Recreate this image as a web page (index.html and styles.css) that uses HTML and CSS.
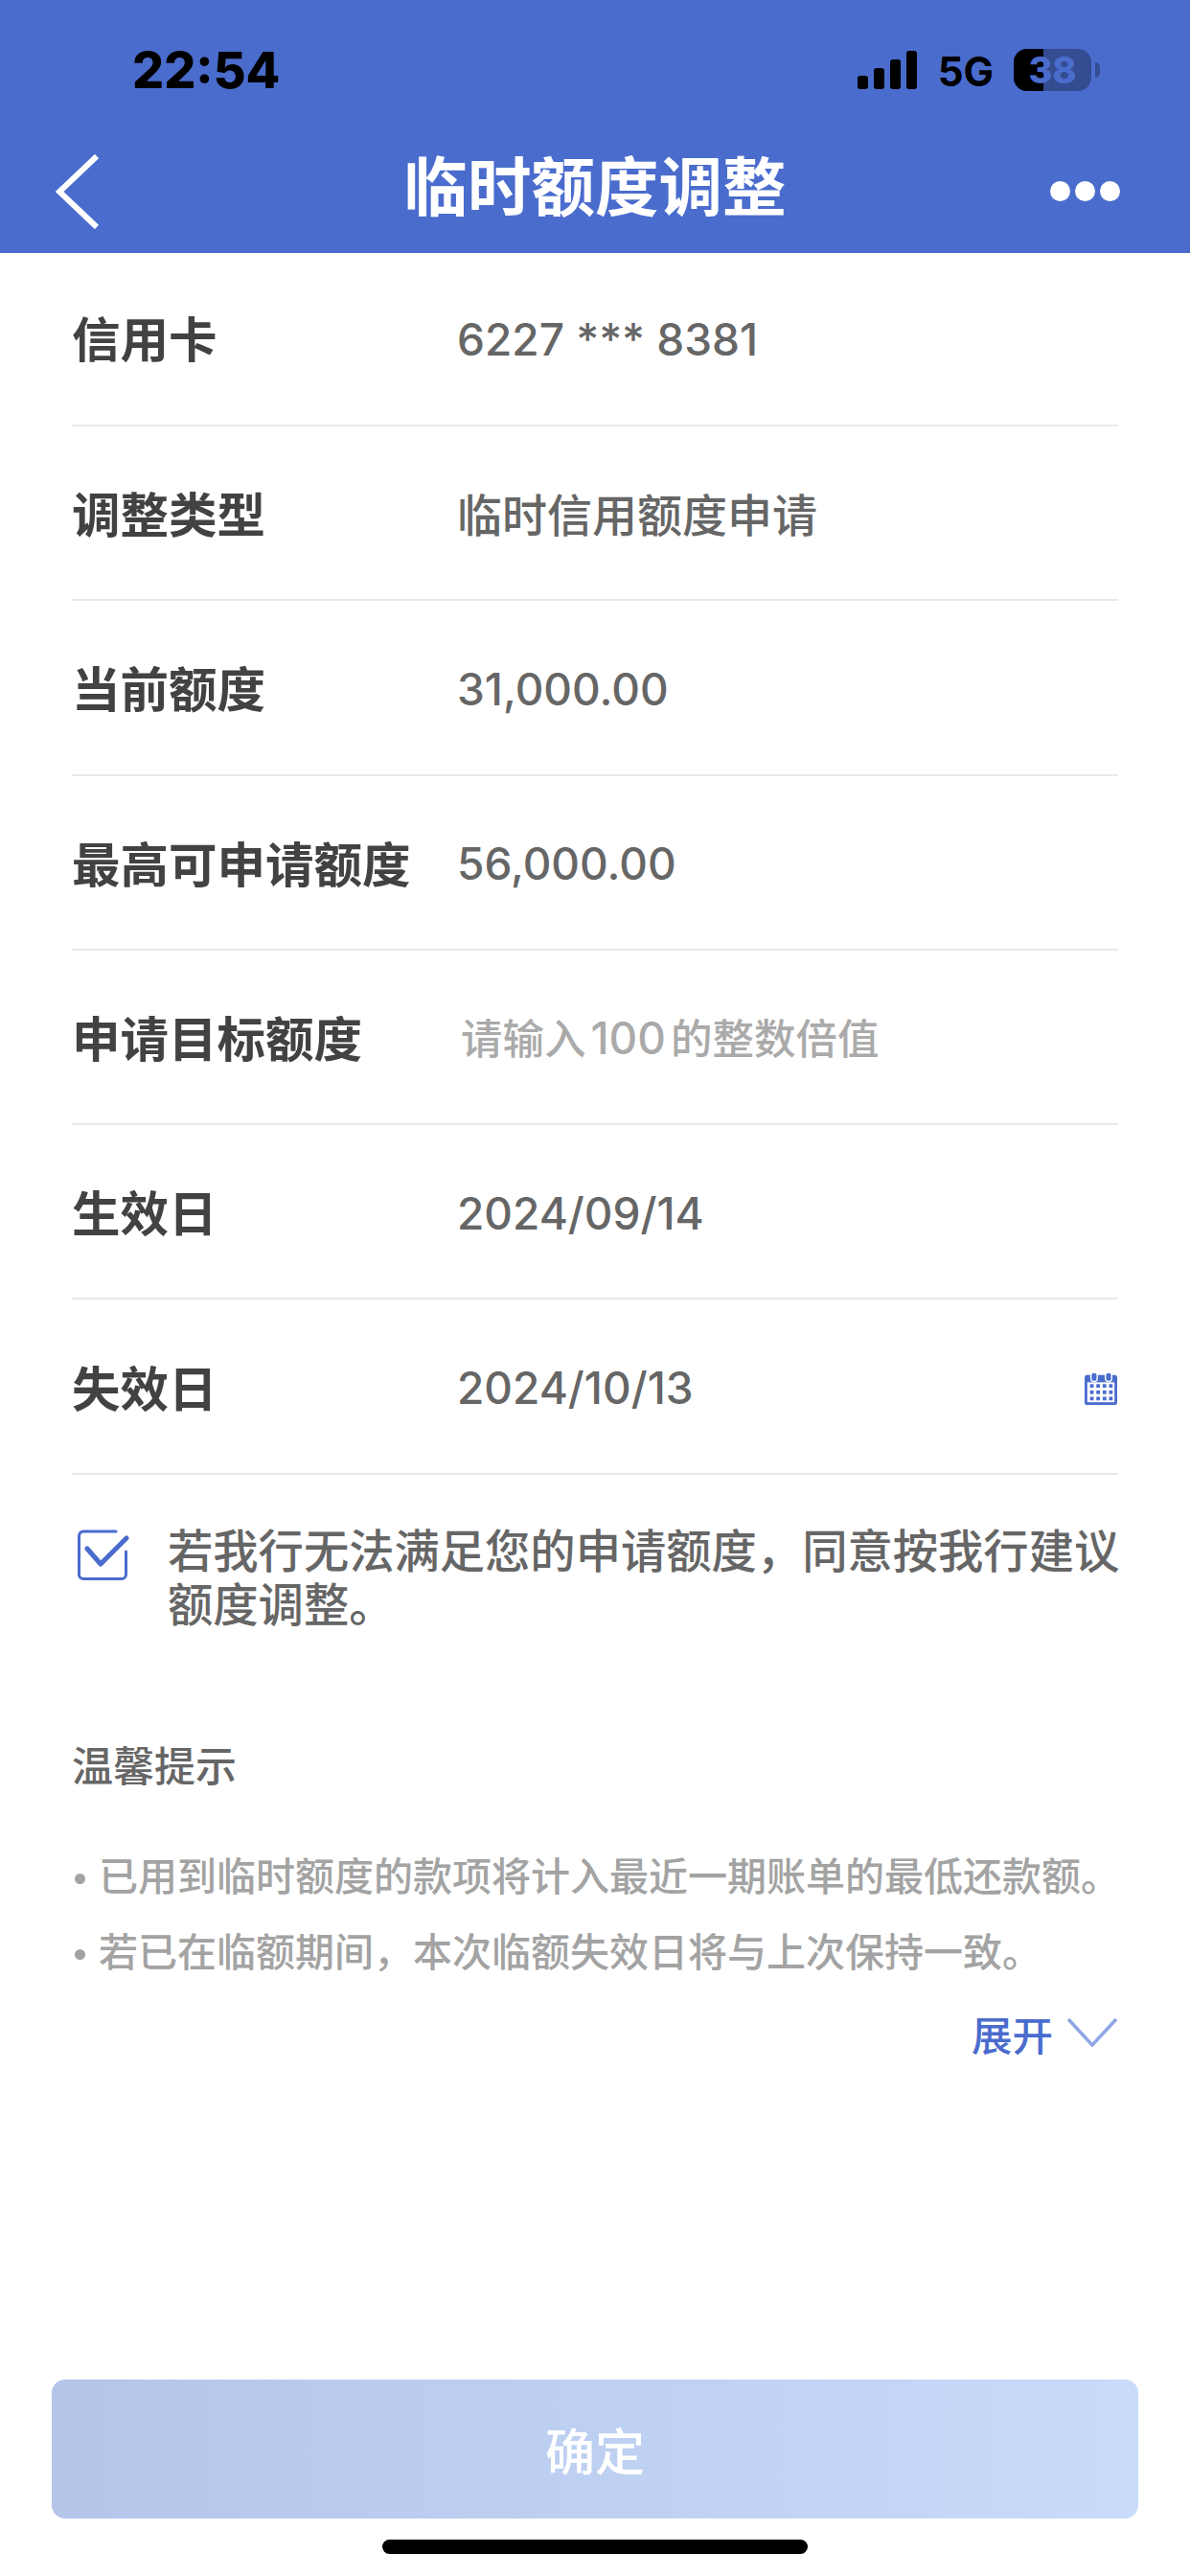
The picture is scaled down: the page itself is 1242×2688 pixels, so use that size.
FILE: index.html
```html
<!DOCTYPE html>
<html lang="zh-CN">
<head>
  <meta charset="UTF-8" />
  <title>临时额度调整</title>
  <link rel="stylesheet" href="styles.css">
</head>
<body>
  <div class="page">
    <!-- 顶部蓝色区域 -->
    <header class="top">
      <div class="status-bar">
        <span class="time">22:54</span>
        <div class="status-right">
          <svg class="signal" width="62" height="40" viewBox="0 0 62 40">
            <rect x="0" y="26" width="11" height="14" rx="3" />
            <rect x="17" y="18" width="11" height="22" rx="3" />
            <rect x="34" y="9" width="11" height="31" rx="3" />
            <rect x="51" y="0" width="11" height="40" rx="3" />
          </svg>
          <span class="net">5G</span>
          <div class="battery">
            <div class="battery-fill"></div>
            <span class="battery-num">38</span>
          </div>
          <div class="battery-nub"></div>
        </div>
      </div>
      <nav class="nav">
        <svg class="back" width="46" height="78" viewBox="0 0 46 78">
          <path d="M43 2 L4 39 L43 76" fill="none" stroke="#fff" stroke-width="6" />
        </svg>
        <h1 class="nav-title">临时额度调整</h1>
        <div class="more"><i></i><i></i><i></i></div>
      </nav>
    </header>

    <!-- 表单 -->
    <section class="form">
      <div class="row"><span class="label">信用卡</span><span class="value num">6227 *** 8381</span></div>
      <div class="row"><span class="label">调整类型</span><span class="value">临时信用额度申请</span></div>
      <div class="row"><span class="label">当前额度</span><span class="value num">31,000.00</span></div>
      <div class="row"><span class="label">最高可申请额度</span><span class="value num">56,000.00</span></div>
      <div class="row"><span class="label">申请目标额度</span><span class="placeholder">请输入<b>100</b>的整数倍值</span></div>
      <div class="row"><span class="label">生效日</span><span class="value num">2024/09/14</span></div>
      <div class="row">
        <span class="label">失效日</span><span class="value num">2024/10/13</span>
        <svg class="calendar" width="34" height="36" viewBox="0 0 36 38">
          <path d="M3 4 H33 a3 3 0 0 1 3 3 V34 a3 3 0 0 1 -3 3 H3 a3 3 0 0 1 -3 -3 V7 a3 3 0 0 1 3 -3 Z" fill="#4a6ccd" />
          <rect x="3" y="12" width="30" height="22" fill="#fff" />
          <rect x="7" y="1" width="7" height="10" rx="3.5" fill="#4a6ccd" stroke="#fff" stroke-width="1.5" />
          <rect x="23" y="1" width="7" height="10" rx="3.5" fill="#4a6ccd" stroke="#fff" stroke-width="1.5" />
          <g fill="#4a6ccd">
            <rect x="6" y="14" width="4" height="4" /><rect x="13" y="14" width="4" height="4" /><rect x="20" y="14" width="4" height="4" /><rect x="27" y="14" width="4" height="4" />
            <rect x="6" y="21" width="4" height="4" /><rect x="13" y="21" width="4" height="4" /><rect x="20" y="21" width="4" height="4" /><rect x="27" y="21" width="4" height="4" />
            <rect x="6" y="28" width="4" height="4" /><rect x="13" y="28" width="4" height="4" /><rect x="20" y="28" width="4" height="4" /><rect x="27" y="28" width="4" height="4" />
          </g>
        </svg>
      </div>
    </section>

    <!-- 同意勾选 -->
    <div class="agree">
      <svg class="check" width="54" height="54" viewBox="0 0 54 54">
        <path d="M40 2 H6 a4.500 4.500 0 0 0 -4.500 4.500 V47 a4.500 4.500 0 0 0 4.500 4.500 H46 a4.500 4.500 0 0 0 4.500 -4.500 V23" fill="none" stroke="#4a6ccd" stroke-width="3" stroke-linecap="round" />
        <path d="M10 20 L24 36 L51 9" fill="none" stroke="#4a6ccd" stroke-width="5" stroke-linecap="round" stroke-linejoin="round" />
      </svg>
      <p class="agree-text">若我行无法满足您的申请额度，同意按我行建议额度调整。</p>
    </div>

    <!-- 温馨提示 -->
    <section class="tips">
      <h3 class="tips-title">温馨提示</h3>
      <ul class="tips-list">
        <li>已用到临时额度的款项将计入最近一期账单的最低还款额。</li>
        <li>若已在临额期间，本次临额失效日将与上次保持一致。</li>
      </ul>
      <div class="expand">
        <span>展开</span>
        <svg width="54" height="32" viewBox="0 0 54 32">
          <path d="M2 2 L27 29 L52 2" fill="none" stroke="#8ea6e4" stroke-width="3.500" />
        </svg>
      </div>
    </section>

    <!-- 底部按钮 -->
    <div class="bottom">
      <button class="confirm-btn">确定</button>
      <div class="home-bar"></div>
    </div>
  </div>
</body>
</html>
```

FILE: styles.css
```css
/* 全局 */
html, body {
  margin: 0;
  padding: 0;
}
body {
  font-family: "Inter", "Noto Sans CJK SC", sans-serif;
  background-color: #fff;
}

.page {
  display: flex;
  flex-direction: column;
  height: 2688px;
  overflow: hidden;
}

/* 顶部 */
.top {
  background-color: #4a6ccd;
  height: 264px;
  box-sizing: border-box;
  padding-top: 51px;
}

.status-bar {
  display: flex;
  justify-content: space-between;
  align-items: center;
  height: 44px;
  padding: 0 94px 0 138px;
}
.time {
  margin-top: 2px;
  font-size: 52px;
  font-weight: 800;
  color: #000;
  line-height: 44px;
}
.status-right {
  display: flex;
  align-items: center;
}
.signal {
  fill: #000;
  margin-right: 22px;
}
.net {
  margin-top: 3px;
  font-size: 42px;
  font-weight: 700;
  color: #000;
  line-height: 44px;
  margin-right: 21px;
}
.battery {
  position: relative;
  width: 81px;
  height: 44px;
  border-radius: 14px;
  background-color: #344c91;
  overflow: hidden;
  display: flex;
  justify-content: center;
  align-items: center;
}
.battery-fill {
  position: absolute;
  left: 0;
  top: 0;
  bottom: 0;
  width: 31px;
  background-color: #000;
}
.battery-num {
  position: relative;
  font-size: 38px;
  font-weight: 800;
  color: #4a6ccd;
  line-height: 44px;
}
.battery-nub {
  width: 5px;
  height: 16px;
  margin-left: 4px;
  border-radius: 0 5px 5px 0;
  background-color: #344c91;
}

.nav {
  position: relative;
  display: flex;
  justify-content: space-between;
  align-items: center;
  height: 80px;
  margin-top: 65px;
  padding: 0 73px 0 58px;
}
.nav-title {
  position: absolute;
  top: -4px;
  left: 0;
  right: 0;
  margin: 0;
  text-align: center;
  font-size: 66.500px;
  font-weight: 700;
  color: #fff;
  line-height: 80px;
}
.more {
  display: flex;
  gap: 5px;
  margin-top: -2px;
}
.more i {
  display: block;
  width: 21px;
  height: 21px;
  border-radius: 50%;
  background-color: #fff;
}

/* 表单 */
.form {
  padding: 0 75px;
}
.row {
  display: flex;
  align-items: center;
  height: 182.300px;
  padding-bottom: 2px;
  border-bottom: 2px solid #e8e8e8;
  box-sizing: border-box;
}
.row:first-child {
  height: 181px;
  padding-bottom: 5px;
}
.label {
  width: 402px;
  font-size: 50.500px;
  font-weight: 700;
  color: #424242;
}
.value {
  flex: 1;
  font-size: 47px;
  font-weight: 500;
  color: #666;
}
.num {
  margin-top: 5px;
  font-size: 46px;
}
.placeholder {
  flex: 1;
  margin-left: 4px;
  font-size: 43.500px;
  font-weight: 500;
  color: #aaa;
}
.placeholder b {
  margin: 0 5px;
  font-size: 46px;
  font-weight: 500;
}
.calendar {
  margin-top: 6px;
  margin-right: 1px;
}

/* 同意 */
.agree {
  display: flex;
  padding: 52px 65px 0 81px;
}
.check {
  flex-shrink: 0;
  margin-top: 5px;
}
.agree-text {
  margin: 0 0 0 40px;
  font-size: 47.300px;
  font-weight: 500;
  line-height: 56px;
  color: #666;
}

/* 提示 */
.tips {
  padding: 0 75px;
}
.tips-title {
  margin: 110px 0 0;
  font-size: 43px;
  font-weight: 500;
  line-height: 60px;
  color: #666;
}
.tips-list {
  list-style: none;
  margin: 46px 0 0;
  padding: 0;
}
.tips-list li {
  position: relative;
  padding-left: 28px;
  font-size: 41px;
  font-weight: 500;
  line-height: 79px;
  white-space: nowrap;
  color: #a3a3a3;
}
.tips-list li::before {
  content: "";
  position: absolute;
  left: 3px;
  top: 36px;
  width: 11px;
  height: 11px;
  border-radius: 50%;
  background-color: #a3a3a3;
}
.expand {
  display: flex;
  justify-content: flex-end;
  align-items: center;
  gap: 14px;
  margin-top: 14px;
  font-size: 42.500px;
  font-weight: 500;
  color: #4a6ccd;
}

/* 底部 */
.bottom {
  margin-top: auto;
  padding: 0 54px;
}
.confirm-btn {
  display: block;
  width: 100%;
  height: 145px;
  border: none;
  border-radius: 14px;
  background: linear-gradient(to right, #b4c5ea, #c8dbfa);
  font-family: inherit;
  font-size: 52px;
  font-weight: 500;
  color: #fff;
}
.home-bar {
  width: 444px;
  height: 15px;
  margin: 22px auto 23px;
  border-radius: 8px;
  background-color: #000;
}
```
